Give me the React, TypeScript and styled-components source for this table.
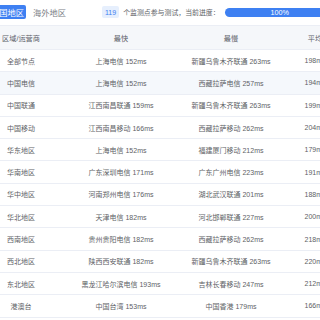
import React from "react";
import styled, {createGlobalStyle} from "styled-components";

const GlobalStyle = createGlobalStyle`
  html, body {
    margin: 0;
    padding: 0;
    background: #ffffff;
    overflow: hidden;
  }
  body {
    font-family: "Liberation Sans", "Noto Sans CJK SC", sans-serif;
  }
`

interface ActiveProp {
    active?: boolean
}
interface RowProp {
    highlight?: boolean
}

const Page = styled.div`
  display: flex;
  flex-direction: column;
  width: 368px;
  margin-left: -28px;
`
const TopBar = styled.div`
  display: flex;
  flex-direction: row;
  align-items: center;
  height: 25px;
  padding-left: 17px;
  padding-bottom: 1px;
  box-sizing: border-box;
`
const Tab = styled.span<ActiveProp>`
  display: flex;
  align-items: center;
  height: 14px;
  padding: 0 2px;
  margin-right: 5px;
  border-radius: 2px;
  font-size: 8.25px;
  color: ${props => props.active ? "#ffffff" : "#7a7e85"};
  background: ${props => props.active ? "#3e80f2" : "transparent"};
`
const Badge = styled.span`
  display: flex;
  align-items: center;
  height: 12px;
  margin-left: 29px;
  padding: 0 3px;
  border-radius: 2px;
  font-size: 7px;
  color: #3e80f2;
  background: #e6effd;
`
const StatusText = styled.span`
  margin-left: 4px;
  font-size: 6.9px;
  color: #606266;
  white-space: nowrap;
`
const Progress = styled.div`
  display: flex;
  align-items: center;
  justify-content: center;
  flex-shrink: 0;
  width: 110px;
  height: 9px;
  margin-left: 5px;
  border-radius: 4.5px;
  background: #3e80f2;
  font-size: 7.2px;
  color: #ffffff;
`
const Row = styled.div<RowProp>`
  display: grid;
  grid-template-columns: 98px 102px 118px 50px;
  align-items: center;
  height: 22.3px;
  box-sizing: border-box;
  border-bottom: 1px solid #ebeef5;
  background: ${props => props.highlight ? "#f5f8fc" : "#ffffff"};
`
const HeaderRow = styled(Row)`
  height: 25px;
  border-top: 1px solid #ebeef5;
  background: #f5f7fa;
`
const Cell = styled.div`
  text-align: center;
  white-space: nowrap;
  font-size: 7px;
  color: #606266;
`
const HeaderCell = styled(Cell)`
  font-size: 7.2px;
  color: #5c6068;
`

const rows = [
    ["全部节点", "上海电信 152ms", "新疆乌鲁木齐联通 263ms", "198ms"],
    ["中国电信", "上海电信 152ms", "西藏拉萨电信 257ms", "194ms"],
    ["中国联通", "江西南昌联通 159ms", "新疆乌鲁木齐联通 263ms", "199ms"],
    ["中国移动", "江西南昌移动 166ms", "西藏拉萨移动 262ms", "204ms"],
    ["华东地区", "上海电信 152ms", "福建厦门移动 212ms", "179ms"],
    ["华南地区", "广东深圳电信 171ms", "广东广州电信 223ms", "191ms"],
    ["华中地区", "河南郑州电信 176ms", "湖北武汉联通 201ms", "188ms"],
    ["华北地区", "天津电信 182ms", "河北邯郸联通 227ms", "200ms"],
    ["西南地区", "贵州贵阳电信 182ms", "西藏拉萨移动 262ms", "218ms"],
    ["西北地区", "陕西西安联通 182ms", "新疆乌鲁木齐联通 263ms", "220ms"],
    ["东北地区", "黑龙江哈尔滨电信 193ms", "吉林长春移动 247ms", "212ms"],
    ["港澳台", "中国台湾 153ms", "中国香港 179ms", "166ms"],
]

const App = () => {
    return (
        <>
            <GlobalStyle/>
            <Page>
                <TopBar>
                    <Tab active>中国地区</Tab>
                    <Tab>海外地区</Tab>
                    <Badge>119</Badge>
                    <StatusText>个监测点参与测试，当前进度：</StatusText>
                    <Progress>100%</Progress>
                </TopBar>
                <HeaderRow>
                    <HeaderCell>区域/运营商</HeaderCell>
                    <HeaderCell>最快</HeaderCell>
                    <HeaderCell>最慢</HeaderCell>
                    <HeaderCell>平均</HeaderCell>
                </HeaderRow>
                {rows.map((r, i) =>
                    <Row key={r[0]} highlight={i === 1}>
                        {r.map((c, j) => <Cell key={j}>{c}</Cell>)}
                    </Row>
                )}
            </Page>
        </>
    )
}

export default App
